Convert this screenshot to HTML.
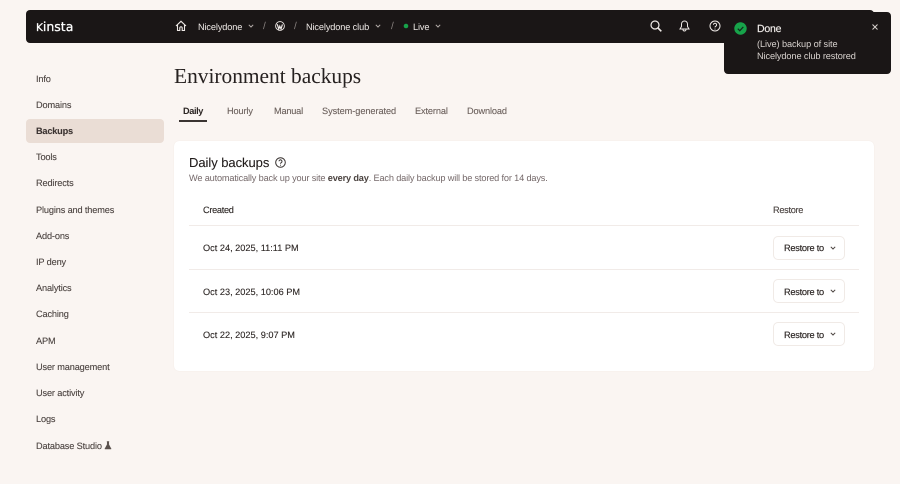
<!DOCTYPE html>
<html lang="en"><head><meta charset="utf-8"><title>Environment backups</title>
<style>
*{box-sizing:border-box}
html,body{margin:0;padding:0}
body{width:900px;height:484px;overflow:hidden;background:#faf5f2;font-family:"Liberation Sans",sans-serif;position:relative;color:#2b2523;text-rendering:geometricPrecision}
.t{position:absolute;white-space:nowrap;line-height:14px}
.bar{position:absolute;left:26px;top:10px;width:848px;height:33px;background:#1a1616;border-radius:4px}
.w{color:#eee9e6;font-size:9.2px;letter-spacing:-.12px;top:20px}
.sep{color:#8a8380;font-size:10px;top:20px}
.nav{font-size:9.2px;color:#4b4340;left:36px;letter-spacing:-.14px;-webkit-text-stroke:.1px #4b4340}
.active{position:absolute;left:26px;top:119px;width:138px;height:24px;background:#eaddd5;border-radius:4px}
.tab{font-size:9.2px;color:#6a5f5b;top:104px;letter-spacing:-.12px;-webkit-text-stroke:.1px #6a5f5b}
.card{position:absolute;left:174px;top:141px;width:700px;height:230px;background:#fff;border-radius:5px;box-shadow:0 0 1px #eadfd9}
.line{position:absolute;left:189px;width:670px;height:1px;background:#f1ebe8}
.d{font-size:9.2px;left:203px;color:#2b2523;letter-spacing:0;-webkit-text-stroke:.1px #2b2523}
.btn{position:absolute;left:773px;width:72px;height:24px;background:#fff;border:1px solid #f0eae6;border-radius:5px}
.btn span{position:absolute;left:10px;top:5px;font-size:9.2px;line-height:14px;white-space:nowrap;color:#2b2523;letter-spacing:-.25px;-webkit-text-stroke:.15px #2b2523}
svg{position:absolute;overflow:visible}
.toast{position:absolute;left:724px;top:12px;width:167px;height:62px;background:#1a1616;border-radius:4px}
</style></head><body>
<div class="bar"></div>
<div class="t" style="left:36px;top:20px;font-family:'DejaVu Sans',sans-serif;font-size:12.5px;color:#fff;-webkit-text-stroke:.25px #fff"><span style="font-size:10.5px">K</span>insta</div>
<svg style="left:175px;top:20px" width="12" height="12" viewBox="0 0 12 12" fill="none" stroke="#eee9e6" stroke-width="1.1"><path d="M1 6 6 1.3 11 6M2.500 5v5.500h2.300V8a1.200 1.200 0 0 1 2.400 0v2.500h2.300V5"/></svg>
<div class="t w" style="left:198px">Nicelydone</div>
<svg style="left:248px;top:24px" width="6" height="4" fill="none" stroke="#b5aeaa"><path d="M.8.800 3 3 5.200.800"/></svg>
<div class="t sep" style="left:263px">/</div>
<svg style="left:275px;top:21px" width="10" height="10" viewBox="0 0 10 10"><circle cx="5" cy="5" r="4.400" fill="none" stroke="#eee9e6" stroke-width=".9"/><path d="M2.200 3.200 3.800 8l1-2.800L6 8l1.400-4.600" fill="none" stroke="#eee9e6" stroke-width="1.200"/></svg>
<div class="t sep" style="left:294px">/</div>
<div class="t w" style="left:306px">Nicelydone club</div>
<svg style="left:375px;top:24px" width="6" height="4" fill="none" stroke="#b5aeaa"><path d="M.8.800 3 3 5.200.800"/></svg>
<div class="t sep" style="left:391px">/</div>
<svg style="left:403px;top:23px" width="6" height="6"><circle cx="3" cy="3" r="2.300" fill="#17a34a"/></svg>
<div class="t w" style="left:413px">Live</div>
<svg style="left:435px;top:24px" width="6" height="4" fill="none" stroke="#b5aeaa"><path d="M.8.800 3 3 5.200.800"/></svg>
<svg style="left:650px;top:20px" width="12" height="12" fill="none" stroke="#eee9e6" stroke-width="1.200"><circle cx="5" cy="5" r="4"/><path d="M8 8l3.300 3.300" stroke-width="1.600"/></svg>
<svg style="left:679px;top:20px" width="11" height="12" fill="none" stroke="#eee9e6" stroke-width="1"><path d="M5.500 1a3 3 0 0 0-3 3v2.500L1 9h9L8.500 6.500V4a3 3 0 0 0-3-3zM4 9.500a1.500 1.500 0 0 0 3 0"/></svg>
<svg style="left:709px;top:20px" width="12" height="12" fill="none" stroke="#eee9e6" stroke-width="1"><circle cx="6" cy="6" r="5"/><path d="M4.400 4.800a1.600 1.600 0 1 1 2.400 1.400c-.6.300-.8.600-.8 1.200"/><path d="M6 8.600v.9"/></svg>

<div class="toast"></div>
<svg style="left:734px;top:22px" width="13" height="13"><circle cx="6.500" cy="6.500" r="6.200" fill="#17a34a"/><path d="M3.800 6.700l2 2 3.500-3.800" fill="none" stroke="#12291b" stroke-width="1.200"/></svg>
<div class="t" style="left:757px;top:22px;font-size:10.500px;color:#f3efec;letter-spacing:-.2px;-webkit-text-stroke:.15px #f3efec">Done</div>
<div class="t" style="left:757px;top:37px;font-size:9.200px;color:#d8d2ce;letter-spacing:-.08px">(Live) backup of site</div>
<div class="t" style="left:757px;top:49px;font-size:9.200px;color:#d8d2ce;letter-spacing:-.1px">Nicelydone club restored</div>
<svg style="left:872px;top:24px" width="6" height="6" stroke="#d8d2ce" stroke-width="1"><path d="M.5.500l5 5M5.500.500l-5 5"/></svg>

<div class="active"></div>
<div class="t nav" style="top:72px">Info</div>
<div class="t nav" style="top:98px">Domains</div>
<div class="t nav" style="top:124px;font-weight:700;color:#3a3230;letter-spacing:-.2px">Backups</div>
<div class="t nav" style="top:150px">Tools</div>
<div class="t nav" style="top:176px">Redirects</div>
<div class="t nav" style="top:203px">Plugins and themes</div>
<div class="t nav" style="top:229px">Add-ons</div>
<div class="t nav" style="top:255px">IP deny</div>
<div class="t nav" style="top:281px">Analytics</div>
<div class="t nav" style="top:307px">Caching</div>
<div class="t nav" style="top:334px">APM</div>
<div class="t nav" style="top:360px">User management</div>
<div class="t nav" style="top:386px">User activity</div>
<div class="t nav" style="top:412px">Logs</div>
<div class="t nav" style="top:439px">Database Studio</div>
<svg style="left:104px;top:441px" width="8" height="9"><path d="M2.800.500h2.400M3.200.500v3L.800 8h6.400L4.800 3.500v-3" fill="#5a514d" stroke="#5a514d" stroke-width=".5"/></svg>

<div class="t" style="left:174px;top:63px;font-family:'Liberation Serif',serif;font-size:21.400px;line-height:26px;color:#262120">Environment backups</div>
<div class="t tab" style="left:183px;color:#2b2523;font-weight:700;letter-spacing:-.4px;-webkit-text-stroke:0">Daily</div>
<div style="position:absolute;left:179px;top:120px;width:28px;height:2px;background:#3a3432"></div>
<div class="t tab" style="left:227px">Hourly</div>
<div class="t tab" style="left:274px;letter-spacing:-.2px">Manual</div>
<div class="t tab" style="left:322px;letter-spacing:-.06px">System-generated</div>
<div class="t tab" style="left:415px">External</div>
<div class="t tab" style="left:467px">Download</div>

<div class="card"></div>
<div class="t" style="left:189px;top:156px;font-size:13px;color:#211c1b;letter-spacing:-.05px;-webkit-text-stroke:.1px #211c1b">Daily backups</div>
<svg style="left:275px;top:157px" width="11" height="11" fill="none" stroke="#3a3432" stroke-width="1"><circle cx="5.500" cy="5.500" r="4.800"/><path d="M4 4.300a1.500 1.500 0 1 1 2.300 1.300c-.5.300-.8.500-.8 1.100M5.500 7.800v.8"/></svg>
<div class="t" style="left:189px;top:171px;font-size:9.200px;color:#75696a;letter-spacing:-.16px">We automatically back up your site <b style="color:#4b4340">every day</b>. Each daily backup will be stored for 14 days.</div>
<div class="t d" style="top:203px;letter-spacing:-.3px">Created</div>
<div class="t d" style="left:773px;top:203px;color:#4b4340;letter-spacing:-.3px">Restore</div>
<div class="line" style="top:225px"></div>
<div class="line" style="top:269px"></div>
<div class="line" style="top:312px"></div>
<div class="t d" style="top:241px">Oct 24, 2025, 11:11 PM</div>
<div class="t d" style="top:285px">Oct 23, 2025, 10:06 PM</div>
<div class="t d" style="top:328px">Oct 22, 2025, 9:07 PM</div>
<div class="btn" style="top:236px"><span style="top:4px">Restore to</span><svg style="left:56px;top:9px" width="6" height="4" fill="none" stroke="#4b4340"><path d="M.8.800 3 3 5.200.800"/></svg></div>
<div class="btn" style="top:279px"><span>Restore to</span><svg style="left:56px;top:9px" width="6" height="4" fill="none" stroke="#4b4340"><path d="M.8.800 3 3 5.200.800"/></svg></div>
<div class="btn" style="top:322px"><span>Restore to</span><svg style="left:56px;top:9px" width="6" height="4" fill="none" stroke="#4b4340"><path d="M.8.800 3 3 5.200.800"/></svg></div>
</body></html>
